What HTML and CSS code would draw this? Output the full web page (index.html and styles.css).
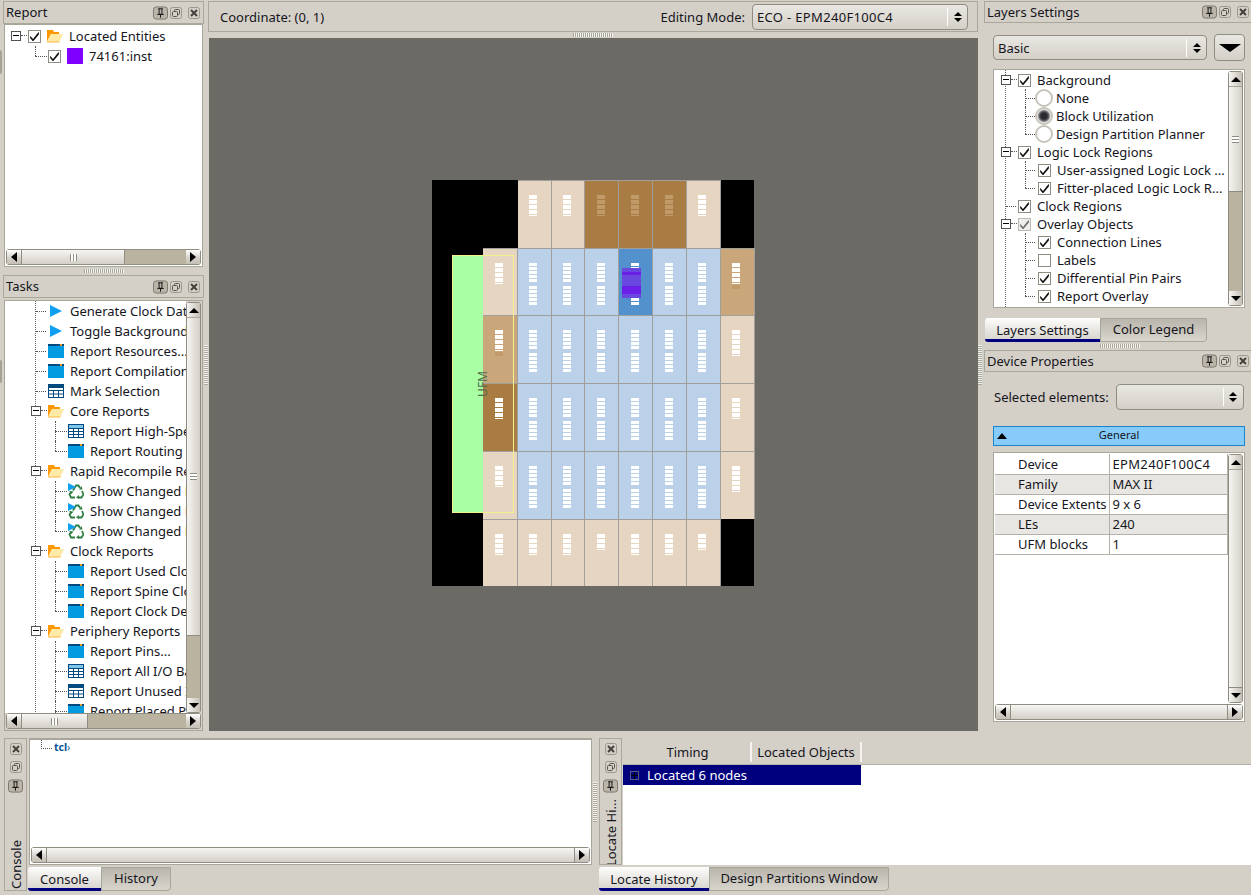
FILE: index.html
```html
<!DOCTYPE html>
<html lang="en">
<head>
<meta charset="utf-8">
<title>Chip Planner</title>
<link rel="stylesheet" href="styles.css">
</head>
<body>
<svg class="defs" width="0" height="0">
  <defs>
    <symbol id="i-check" viewBox="0 0 13 13"><path d="M2.5 6.5 L5 9.5 L10.5 2.5 L10.5 4.5 L5 11 L2.5 8 Z" fill="#000" stroke="#000" stroke-width=".6"/></symbol>
    <symbol id="i-folder" viewBox="0 0 16 14"><path d="M0 1 H6 L7 3 H12 V5 H4 L0 13 Z" fill="#ff9800"/><path d="M0 13 L4 5 H16 L12.500 13 Z" fill="#ffe9a6"/><path d="M0 13 H12.500" stroke="#ffb640" stroke-width="1"/></symbol>
    <symbol id="i-play" viewBox="0 0 16 14"><path d="M2 1 L14 7 L2 13 Z" fill="#0f9ff0"/></symbol>
    <symbol id="i-report" viewBox="0 0 16 14"><rect y="1" width="16" height="13" fill="#009be0"/><rect y="0" width="16" height="2" fill="#004a80"/><rect x="12" y="0" width="2" height="2" fill="#f0a020"/></symbol>
    <symbol id="i-table" viewBox="0 0 16 14"><rect x=".5" y=".5" width="15" height="13" fill="#fff" stroke="#004a80"/><rect x="1" y="1" width="14" height="3" fill="#7fc4ec"/><path d="M0 4.500 H16 M0 7.500 H16 M0 10.500 H16 M5.500 5 V14 M10.500 5 V14" stroke="#004a80"/></symbol>
    <symbol id="i-table-dark" viewBox="0 0 16 14"><rect x=".5" y=".5" width="15" height="13" fill="#fff" stroke="#004a80"/><rect x="1" y="1" width="14" height="3" fill="#004a80"/><path d="M0 6.500 H16 M0 10 H16 M5.500 6 V14 M10.500 6 V14" stroke="#004a80"/></symbol>
    <symbol id="i-recycle" viewBox="0 0 16 16"><g fill="none" stroke="#2f7f45" stroke-width="1.800"><path d="M5 7.500 L8 2.500 H10.500 L12 5"/><path d="M14 8 L15.500 11.500 L13.500 14.500 H10.500"/><path d="M7 14.500 H3 L1.500 11.500 L3 9"/></g><path d="M11 6.500 L14.500 6.500 L13.500 3 Z M11 12 V16 L8 14.500 Z M1 8 L5.500 8.500 L3.500 11 Z" fill="#2f7f45"/><path d="M0 0 L8 4 L0 8 Z" fill="#0f9ff0"/></symbol>
    <symbol id="i-pin" viewBox="0 0 16 14"><rect x=".5" y=".5" width="15" height="13" rx="3" fill="#bab5a8" stroke="#77746b"/><path d="M5.500 2.500 H10.500 M6.500 2.500 V8.500 H9.500 V2.500 M4.500 8.500 H11.500 M8 8.500 V12" fill="none" stroke="#111"/></symbol>
    <symbol id="i-float" viewBox="0 0 12 12"><rect x=".5" y=".5" width="11" height="11" rx="2" fill="#d4d0c8" stroke="#9a978d"/><rect x="4.500" y="2.500" width="5" height="5" rx="1" fill="none" stroke="#55534d"/><rect x="2.500" y="4.500" width="5" height="5" rx="1" fill="#d4d0c8" stroke="#55534d"/></symbol>
    <symbol id="i-close" viewBox="0 0 12 12"><rect x=".5" y=".5" width="11" height="11" rx="2" fill="#d4d0c8" stroke="#9a978d"/><path d="M3 3 L9 9 M9 3 L3 9" stroke="#44423d" stroke-width="2"/></symbol>
  </defs>
</svg>

<div class="app">
  <div class="upper">
    <aside class="left-col">
      <i class="edge edge-a"></i><i class="edge edge-b"></i>
      <section class="left-report">
        <header class="title"><span class="title-text">Report</span><span class="title-btns"><svg class="b-pin"><use href="#i-pin"/></svg><svg class="b-small"><use href="#i-float"/></svg><svg class="b-small"><use href="#i-close"/></svg></span></header>
        <div class="well report-well">
          <div class="tree report-tree">
            <div class="row"><span class="exp"></span><span class="cb"><svg><use href="#i-check"/></svg></span><svg class="ic"><use href="#i-folder"/></svg><span>Located Entities</span></div>
            <div class="row rep-sub"><span class="cb"><svg><use href="#i-check"/></svg></span><span class="swatch"></span><span>74161:inst</span></div>
          </div>
          <div class="hscroll"><span class="sb-btn"><i class="tri-l"></i></span><span class="thumb-h thumb-rep"><i class="grip-v"></i></span><span class="trough"></span><span class="sb-btn"><i class="tri-r"></i></span></div>
        </div>
      </section>
      <div class="split-h split-left-h"><i class="handle-h"></i></div>
      <section class="left-tasks">
        <header class="title"><span class="title-text">Tasks</span><span class="title-btns"><svg class="b-pin"><use href="#i-pin"/></svg><svg class="b-small"><use href="#i-float"/></svg><svg class="b-small"><use href="#i-close"/></svg></span></header>
        <div class="well tasks-well">
          <div class="well-main">
            <div class="tree tasks-tree">
              <div class="row t0"><svg class="ic"><use href="#i-play"/></svg><span>Generate Clock Data</span></div>
              <div class="row t0"><svg class="ic"><use href="#i-play"/></svg><span>Toggle Background</span></div>
              <div class="row t0"><svg class="ic"><use href="#i-report"/></svg><span>Report Resources...</span></div>
              <div class="row t0"><svg class="ic"><use href="#i-report"/></svg><span>Report Compilation</span></div>
              <div class="row t0"><svg class="ic"><use href="#i-table-dark"/></svg><span>Mark Selection</span></div>
              <div class="row tf"><span class="exp"></span><svg class="ic"><use href="#i-folder"/></svg><span>Core Reports</span></div>
              <div class="row t1"><svg class="ic"><use href="#i-table"/></svg><span>Report High-Speed</span></div>
              <div class="row t1 last"><svg class="ic"><use href="#i-report"/></svg><span>Report Routing Utilization</span></div>
              <div class="row tf"><span class="exp"></span><svg class="ic"><use href="#i-folder"/></svg><span>Rapid Recompile Reports</span></div>
              <div class="row t1"><svg class="ic ic-tall"><use href="#i-recycle"/></svg><span>Show Changed Nodes</span></div>
              <div class="row t1"><svg class="ic ic-tall"><use href="#i-recycle"/></svg><span>Show Changed Nets</span></div>
              <div class="row t1 last"><svg class="ic ic-tall"><use href="#i-recycle"/></svg><span>Show Changed Paths</span></div>
              <div class="row tf"><span class="exp"></span><svg class="ic"><use href="#i-folder"/></svg><span>Clock Reports</span></div>
              <div class="row t1"><svg class="ic"><use href="#i-report"/></svg><span>Report Used Clocks</span></div>
              <div class="row t1"><svg class="ic"><use href="#i-report"/></svg><span>Report Spine Clocks</span></div>
              <div class="row t1 last"><svg class="ic"><use href="#i-report"/></svg><span>Report Clock Details</span></div>
              <div class="row tf"><span class="exp"></span><svg class="ic"><use href="#i-folder"/></svg><span>Periphery Reports</span></div>
              <div class="row t1"><svg class="ic"><use href="#i-report"/></svg><span>Report Pins...</span></div>
              <div class="row t1"><svg class="ic"><use href="#i-table"/></svg><span>Report All I/O Banks</span></div>
              <div class="row t1"><svg class="ic"><use href="#i-table-dark"/></svg><span>Report Unused I/O</span></div>
              <div class="row t1"><svg class="ic"><use href="#i-report"/></svg><span>Report Placed Pins</span></div>
            </div>
            <div class="vscroll"><span class="sb-btn-v"><i class="tri-u"></i></span><span class="thumb-v thumb-tasks"><i class="grip-h"></i></span><span class="trough"></span><span class="sb-btn-v"><i class="tri-d"></i></span></div>
          </div>
          <div class="hscroll"><span class="sb-btn"><i class="tri-l"></i></span><span class="thumb-h thumb-tasks-h"><i class="grip-v"></i></span><span class="trough"></span><span class="sb-btn"><i class="tri-r"></i></span></div>
        </div>
      </section>
    </aside>
    <div class="split-v split-left"><i class="handle-v"></i></div>

    <main class="center">
      <div class="toolbar">
        <span>Coordinate: (0, 1)</span>
        <span class="tool-right">Editing Mode:</span>
        <span class="combo combo-mode"><span class="combo-text wide">ECO - EPM240F100C4</span><span class="spin"><i class="tri-u small"></i><i class="tri-d small"></i></span></span>
      </div>
      <div class="split-h split-center"><i class="handle-h"></i></div>
      <div class="canvas">
        <div class="chip">
          <div class="void"></div><div class="void"></div>
          <div class="cell tan"><span class="io io-a"></span></div>
          <div class="cell tan"><span class="io io-a"></span></div>
          <div class="cell brown"><span class="io io-dim"></span></div>
          <div class="cell brown"><span class="io io-dim"></span></div>
          <div class="cell brown"><span class="io io-dim"></span></div>
          <div class="cell tan"><span class="io io-a"></span></div>
          <div class="void void-end"></div>

          <div class="void"></div>
          <div class="cell tan"><span class="io io-a"></span></div>
          <div class="cell blue"><span class="le"></span><span class="le"></span></div>
          <div class="cell blue"><span class="le"></span><span class="le"></span></div>
          <div class="cell blue"><span class="le"></span><span class="le"></span></div>
          <div class="cell sel"><span class="le"></span><span class="le"></span><span class="placed"></span></div>
          <div class="cell blue"><span class="le"></span><span class="le"></span></div>
          <div class="cell blue"><span class="le"></span><span class="le"></span></div>
          <div class="cell mid"><span class="io io-a"></span><span class="io-tail"></span></div>

          <div class="void"></div>
          <div class="cell mid"><span class="io io-a"></span><span class="io-tail"></span></div>
          <div class="cell blue"><span class="le"></span><span class="le"></span></div>
          <div class="cell blue"><span class="le"></span><span class="le"></span></div>
          <div class="cell blue"><span class="le"></span><span class="le"></span></div>
          <div class="cell blue"><span class="le"></span><span class="le"></span></div>
          <div class="cell blue"><span class="le"></span><span class="le"></span></div>
          <div class="cell blue"><span class="le"></span><span class="le"></span></div>
          <div class="cell tan"><span class="io io-b"></span></div>

          <div class="void"></div>
          <div class="cell brown"><span class="io io-a"></span></div>
          <div class="cell blue"><span class="le"></span><span class="le"></span></div>
          <div class="cell blue"><span class="le"></span><span class="le"></span></div>
          <div class="cell blue"><span class="le"></span><span class="le"></span></div>
          <div class="cell blue"><span class="le"></span><span class="le"></span></div>
          <div class="cell blue"><span class="le"></span><span class="le"></span></div>
          <div class="cell blue"><span class="le"></span><span class="le"></span></div>
          <div class="cell tan"><span class="io io-a"></span></div>

          <div class="void"></div>
          <div class="cell tan"><span class="io io-a"></span></div>
          <div class="cell blue"><span class="le"></span><span class="le"></span></div>
          <div class="cell blue"><span class="le"></span><span class="le"></span></div>
          <div class="cell blue"><span class="le"></span><span class="le"></span></div>
          <div class="cell blue"><span class="le"></span><span class="le"></span></div>
          <div class="cell blue"><span class="le"></span><span class="le"></span></div>
          <div class="cell blue"><span class="le"></span><span class="le"></span></div>
          <div class="cell tan"><span class="io io-b"></span></div>

          <div class="void"></div>
          <div class="cell tan"><span class="io io-a"></span></div>
          <div class="cell tan"><span class="io io-a"></span></div>
          <div class="cell tan"><span class="io io-a"></span></div>
          <div class="cell tan"><span class="io io-c"></span></div>
          <div class="cell tan"><span class="io io-a"></span></div>
          <div class="cell tan"><span class="io io-a"></span></div>
          <div class="cell tan"><span class="io io-c"></span></div>
          <div class="void void-end"></div>

          <div class="ufm"></div>
          <div class="ufm-frame"></div>
          <span class="ufm-label">UFM</span>
        </div>
      </div>
    </main>
    <div class="split-v split-right"><i class="handle-v"></i></div>

    <aside class="right-col">
      <header class="title"><span class="title-text">Layers Settings</span><span class="title-btns"><svg class="b-pin"><use href="#i-pin"/></svg><svg class="b-small"><use href="#i-float"/></svg><svg class="b-small"><use href="#i-close"/></svg></span></header>
      <div class="layers-top">
        <span class="combo combo-basic"><span class="combo-text">Basic</span><span class="spin"><i class="tri-u small"></i><i class="tri-d small"></i></span></span>
        <span class="drop-btn"><i class="tri-big"></i></span>
      </div>
      <div class="well layers-well">
        <div class="tree layers-tree">
          <div class="row l0"><span class="exp"></span><span class="cb"><svg><use href="#i-check"/></svg></span><span>Background</span></div>
          <div class="row lr"><span class="radio"></span><span>None</span></div>
          <div class="row lr"><span class="radio on"></span><span>Block Utilization</span></div>
          <div class="row lr last"><span class="radio"></span><span>Design Partition Planner</span></div>
          <div class="row l0"><span class="exp"></span><span class="cb"><svg><use href="#i-check"/></svg></span><span>Logic Lock Regions</span></div>
          <div class="row lc"><span class="cb"><svg><use href="#i-check"/></svg></span><span>User-assigned Logic Lock ...</span></div>
          <div class="row lc last"><span class="cb"><svg><use href="#i-check"/></svg></span><span>Fitter-placed Logic Lock R...</span></div>
          <div class="row l0b"><span class="cb"><svg><use href="#i-check"/></svg></span><span>Clock Regions</span></div>
          <div class="row l0"><span class="exp"></span><span class="cb cb-gray"><svg><use href="#i-check"/></svg></span><span>Overlay Objects</span></div>
          <div class="row lc"><span class="cb"><svg><use href="#i-check"/></svg></span><span>Connection Lines</span></div>
          <div class="row lc"><span class="cb"></span><span>Labels</span></div>
          <div class="row lc"><span class="cb"><svg><use href="#i-check"/></svg></span><span>Differential Pin Pairs</span></div>
          <div class="row lc last"><span class="cb"><svg><use href="#i-check"/></svg></span><span>Report Overlay</span></div>
        </div>
        <div class="vscroll"><span class="sb-btn-v"><i class="tri-u"></i></span><span class="thumb-v thumb-layers"><i class="grip-h"></i></span><span class="trough"></span><span class="sb-btn-v"><i class="tri-d"></i></span></div>
      </div>
      <div class="tabs tabs-layers"><span class="tab active t-layers">Layers Settings</span><span class="tab t-legend">Color Legend</span></div>
      <div class="split-h split-right-h"><i class="handle-h"></i></div>
      <header class="title"><span class="title-text">Device Properties</span><span class="title-btns"><svg class="b-pin"><use href="#i-pin"/></svg><svg class="b-small"><use href="#i-float"/></svg><svg class="b-small"><use href="#i-close"/></svg></span></header>
      <div class="selected-row"><span>Selected elements:</span><span class="combo combo-sel"><span class="combo-text"></span><span class="spin"><i class="tri-u small"></i><i class="tri-d small"></i></span></span></div>
      <div class="section-bar"><i class="tri-sec"></i><span>General</span></div>
      <div class="well props-well">
        <div class="well-main">
          <div class="props-view">
            <table class="props">
              <tr><td class="pk">Device</td><td class="wide">EPM240F100C4</td></tr>
              <tr class="alt"><td class="pk">Family</td><td>MAX II</td></tr>
              <tr><td class="pk">Device Extents</td><td>9 x 6</td></tr>
              <tr class="alt"><td class="pk">LEs</td><td>240</td></tr>
              <tr><td class="pk">UFM blocks</td><td>1</td></tr>
            </table>
          </div>
          <div class="vscroll"><span class="sb-btn-v"><i class="tri-u"></i></span><span class="thumb-v thumb-full"></span><span class="sb-btn-v"><i class="tri-d"></i></span></div>
        </div>
        <div class="hscroll"><span class="sb-btn"><i class="tri-l"></i></span><span class="thumb-h thumb-full"></span><span class="sb-btn"><i class="tri-r"></i></span></div>
      </div>
    </aside>
  </div>

  <div class="lower">
    <section class="dock dock-console">
      <div class="side side-console">
        <svg class="b-small"><use href="#i-close"/></svg><svg class="b-small"><use href="#i-float"/></svg><svg class="b-pin"><use href="#i-pin"/></svg>
        <span class="side-label">Console</span>
      </div>
      <div class="dock-stack">
        <div class="well console-well">
          <div class="console-view"><span class="tcl">tcl<i class="tcl-gt">›</i></span></div>
          <div class="hscroll"><span class="sb-btn"><i class="tri-l"></i></span><span class="thumb-h thumb-full"></span><span class="sb-btn"><i class="tri-r"></i></span></div>
        </div>
        <div class="tabs tabs-console"><span class="tab active t-console">Console</span><span class="tab t-history">History</span></div>
      </div>
    </section>
    <div class="split-v split-dock"><i class="handle-v"></i></div>
    <section class="dock dock-locate">
      <div class="dock-body">
        <div class="side">
          <svg class="b-small"><use href="#i-close"/></svg><svg class="b-small"><use href="#i-float"/></svg><svg class="b-pin"><use href="#i-pin"/></svg>
          <span class="side-label">Locate Hi...</span>
        </div>
        <div class="locate-view">
          <div class="loc-head"><span class="col-timing">Timing</span><span class="col-objects">Located Objects</span></div>
          <div class="loc-row"><span class="exp exp-plus"></span><span>Located 6 nodes</span></div>
        </div>
      </div>
      <div class="tabs"><span class="tab active t-locate">Locate History</span><span class="tab t-design">Design Partitions Window</span></div>
    </section>
  </div>
</div>
</body>
</html>
```
FILE: styles.css
```css
* { box-sizing: border-box; }
html, body { margin: 0; height: 100%; }
body {
  width: 1251px; height: 895px; overflow: hidden;
  background: #d4d0c8; color: #15151c;
  font: 13px/18px "Noto Sans", sans-serif;
}
.defs { position: absolute; }
.app { display: flex; flex-direction: column; height: 895px; }
.upper { display: flex; height: 735px; }
.lower { display: flex; height: 160px; padding: 3px 0 0 4px; }
.wide { letter-spacing: .33px; }

/* panels */
.left-col { position: relative; width: 204px; padding: 1px 0 0 3px; display: flex; flex-direction: column; flex: none; }
.edge { position: absolute; left: 0; width: 2px; background: #a5a298; border-radius: 0 2px 2px 0; }
.edge-a { top: 50px; height: 24px; }
.edge-b { top: 360px; height: 23px; }
.left-report { display: flex; flex-direction: column; height: 266px; }
.left-tasks { display: flex; flex-direction: column; height: 456px; }
.title {
  height: 23px; flex: none; display: flex; align-items: center; padding: 0 3px 0 2px;
  border: 1px solid #aaa79d;
}
.title-text { padding-bottom: 2px; }
.title-btns { margin-left: auto; display: flex; align-items: center; gap: 2px; }
.title-btns .b-small:last-child { margin-left: 4px; }
.b-pin { width: 15px; height: 14px; flex: none; }
.b-small { width: 12px; height: 12px; flex: none; }
.well { border: 1px solid #a8a59b; background: #fff; display: flex; flex-direction: column; }
.well-main { display: flex; flex: 1; min-height: 0; }
.report-well { margin: 0 1px; flex: 1; min-height: 0; }
.tasks-well { margin: 2px 1px 0; flex: 1; min-height: 0; background: #d4d0c8; }

/* splitters */
.split-h { height: 9px; flex: none; display: flex; align-items: center; justify-content: center; }
.split-left-h { height: 8px; }
.handle-h { display: block; width: 40px; height: 4px; background: repeating-linear-gradient(90deg, #a9a69c 0 1px, #f4f3ef 1px 2px); }
.split-v { width: 4px; flex: none; display: flex; align-items: center; justify-content: center; }
.handle-v { display: block; width: 4px; height: 40px; flex: none; background: repeating-linear-gradient(0deg, #a9a69c 0 1px, #f4f3ef 1px 2px); }
.split-left, .split-right { align-items: flex-start; padding-top: 345px; }

/* scrollbars */
.hscroll { height: 16px; flex: none; display: flex; margin: 0 1px 1px; border: 1px solid #8f8c82; border-radius: 3px; background: #bab3a0; }
.vscroll { width: 15px; flex: none; display: flex; flex-direction: column; margin: 1px 1px 0 0; border: 1px solid #8f8c82; border-radius: 3px; background: #bab3a0; }
.sb-btn { width: 14px; flex: none; display: flex; align-items: center; justify-content: center; background: linear-gradient(#fff, #d4d0c8 60%, #c4c0b6); }
.sb-btn-v { height: 14px; flex: none; display: flex; align-items: center; justify-content: center; background: linear-gradient(90deg, #f6f5f2, #d4d0c8 70%, #c4c0b6); }
.trough { flex: 1; min-width: 0; min-height: 0; }
.thumb-h { flex: none; display: flex; align-items: center; justify-content: center; background: linear-gradient(#f6f5f2, #d4d0c8); border-left: 1px solid #8f8c82; border-right: 1px solid #8f8c82; }
.thumb-v { flex: none; display: flex; align-items: center; justify-content: center; background: linear-gradient(90deg, #f6f5f2, #d4d0c8); border-top: 1px solid #a8a59b; border-bottom: 1px solid #8f8c82; }
.thumb-full { flex: 1; }
.thumb-rep { width: 104px; }
.thumb-tasks-h { width: 67px; }
.thumb-tasks { height: 319px; }
.thumb-layers { height: 106px; }
.grip-v { display: block; width: 7px; height: 7px; background: repeating-linear-gradient(90deg, #8f8c82 0 1px, #fff 1px 3px); }
.grip-h { display: block; width: 7px; height: 7px; background: repeating-linear-gradient(0deg, #8f8c82 0 1px, #fff 1px 3px); }
.tri-l, .tri-r, .tri-u, .tri-d, .tri-big, .tri-sec { display: block; width: 0; height: 0; border-style: solid; border-color: transparent; }
.tri-l { border-width: 5px 6px 5px 0; border-right-color: #000; }
.tri-r { border-width: 5px 0 5px 6px; border-left-color: #000; }
.tri-u { border-width: 0 5px 5px; border-bottom-color: #000; }
.tri-d { border-width: 5px 5px 0; border-top-color: #000; }
.tri-big { border-width: 8px 11px 0; border-top-color: #000; }
.tri-sec { border-width: 0 5.500px 6px; border-bottom-color: #000; }

/* trees */
.tree { flex: 1; min-width: 0; min-height: 0; overflow: hidden; background-color: #fff; }
.row { position: relative; display: flex; align-items: center; white-space: nowrap; height: 20px; }
.row::before, .row::after { position: absolute; display: block; }
.exp {
  width: 10px; height: 10px; flex: none; position: relative; background: #fff; border: 1px solid #55534d;
}
.exp::before { content: ""; position: absolute; left: 1px; right: 1px; top: 3px; height: 2px; border-top: 1px solid #000; }
.exp::after { content: ""; position: absolute; left: 100%; top: 3px; width: 6px; border-top: 1px dotted #555; margin-left: 1px; }
.ic { width: 16px; height: 14px; flex: none; margin-right: 6px; }
.ic-tall { height: 16px; }
.cb { width: 13px; height: 13px; flex: none; background: #fff; border: 1px solid #8f8c82; display: block; position: relative; }
.cb svg { width: 13px; height: 13px; position: absolute; left: -1px; top: -1px; display: block; }
.cb-gray { background: #e6e4df; opacity: .6; }
.swatch { width: 16px; height: 16px; background: #8000ff; flex: none; margin-right: 6px; }

.report-tree { padding-top: 1px; }
.report-tree .row:first-child { padding-left: 6px; }
.report-tree .row:first-child .exp { margin-right: 7px; }
.report-tree .row:first-child .cb { margin-right: 6px; }
.rep-sub { padding-left: 43px; }
.rep-sub .cb { margin-right: 6px; }
.rep-sub::before { content: ""; left: 30px; top: 10px; width: 12px; border-top: 1px dotted #555; }
.rep-sub::after { content: ""; left: 30px; top: 0; height: 10px; border-left: 1px dotted #555; }

.tasks-tree { background-image: linear-gradient(#666 50%, transparent 50%); background-size: 1px 2px; background-repeat: repeat-y; background-position: 30px 0; }
.t0 { padding-left: 43px; }
.t0::before { content: ""; left: 31px; top: 10px; width: 10px; border-top: 1px dotted #555; }
.tf { padding-left: 26px; }
.tf .exp { margin-right: 7px; }
.t1 { padding-left: 63px; }
.t1::before { content: ""; left: 50px; top: 10px; width: 12px; border-top: 1px dotted #555; }
.t1::after { content: ""; left: 50px; top: 0; height: 20px; border-left: 1px dotted #555; }
.t1.last::after { height: 10px; }

/* center */
.center { width: 770px; flex: none; display: flex; flex-direction: column; }
.toolbar { height: 31px; margin-top: 1px; flex: none; display: flex; align-items: center; padding: 0 9px 0 11px; border: 1px solid #aaa79d; }
.tool-right { margin-left: auto; margin-right: 7px; }
.split-center { height: 6px; }
.canvas { height: 693px; margin-left: 1px; background: #6b6a65; padding-top: 142px; display: flex; justify-content: center; align-items: flex-start; }
.chip {
  position: relative; background: none;
  display: grid; grid-template-columns: 51px 35px 34px 33px 34px 34px 34px 34px 34px;
  grid-template-rows: 68px 67px 68px 68px 68px 67px;
  width: 323px; height: 406px;
}
.void { background: #000; }
.void-end { margin-right: 1px; }
.cell { position: relative; border-top: 1px solid #a09f9c; border-right: 1px solid #a09f9c; padding: 14px 0 0 11px; }
.cell:nth-child(9n+2), .cell:nth-child(9n+5), .cell:nth-child(9n+6), .cell:nth-child(9n+7) { padding-left: 12px; }
.tan { background: #e6d6c1; }
.mid { background: #c9a77b; }
.brown { background: #a97c43; }
.blue { background: #bbd1ea; }
.sel { background: #5391cd; }
.le { display: block; width: 8px; height: 20px; margin-bottom: 3px; background: repeating-linear-gradient(#fff 0 3px, transparent 3px 4px); }
.io { display: block; width: 8px; height: 21px; background: repeating-linear-gradient(#fff 0 4px, transparent 4px 5px); }
.io-dim { background: repeating-linear-gradient(#c09a68 0 4px, transparent 4px 5px); }
.io-b { height: 26px; }
.io-c { height: 16px; }
.io-tail { display: block; width: 8px; height: 4px; margin-top: 1px; background: #c09a68; }
.placed { position: absolute; left: 3px; top: 19px; width: 19px; height: 30px; background: linear-gradient(#6a48e0 0 4px, #6a20e8 4px 7px, #6a48e0 7px 10px, #6a48e0 10px 18px, #6a20e8 18px 26px, #6a48e0 26px); }
.ufm { position: absolute; left: 20px; top: 75px; width: 31px; height: 258px; background: #a8ffa4; border: 1px solid #f5f08c; border-right: 0; }
.ufm-frame { position: absolute; left: 20px; top: 75px; width: 62px; height: 258px; border: 1px solid #f5f08c; }
.ufm-label { position: absolute; left: 45px; top: 191px; font-size: 12px; line-height: 12px; color: #4f6e50; writing-mode: vertical-rl; transform: rotate(180deg); }

/* combos */
.combo { display: flex; align-items: center; height: 26px; flex: none; border: 1px solid #8f8c82; border-radius: 4px; background: linear-gradient(#e9e7e2, #d4d0c8); }
.combo-text { flex: 1; padding-left: 4px; }
.spin { width: 20px; height: 18px; flex: none; display: flex; flex-direction: column; align-items: center; justify-content: center; gap: 2px; border-left: 1px solid #fff; }
.tri-u.small { border-width: 0 4px 4px; }
.tri-d.small { border-width: 4px 4px 0; }
.combo-mode { width: 216px; }
.combo-basic { width: 214px; height: 25px; }
.combo-sel { width: 128px; margin-left: 7px; }

/* right */
.right-col { flex: 1; min-width: 0; padding: 1px 0 0 2px; display: flex; flex-direction: column; position: relative; }
.right-col .title { height: 22px; border-right: 0; padding-right: 2px; }
.right-col .title-text { padding: 0; }
.layers-top { display: flex; align-items: center; gap: 7px; padding: 11px 0 8px 9px; height: 46px; flex: none; }
.drop-btn { width: 31px; height: 27px; flex: none; display: flex; align-items: center; justify-content: center; border: 1px solid #8f8c82; border-radius: 4px; background: linear-gradient(#e9e7e2, #d4d0c8); }
.layers-well { margin-left: 9px; width: 252px; height: 239px; flex: none; flex-direction: row; }
.layers-tree { padding-top: 1px; background-image: linear-gradient(#666 50%, transparent 50%); background-size: 1px 2px; background-repeat: repeat-y; background-position: 11px 0; }
.layers-tree .row { height: 18px; }
.l0 { padding-left: 7px; }
.l0 .exp { margin-right: 7px; }
.l0 .cb { margin-right: 6px; }
.l0b .cb { margin-right: 6px; }
.l0b { padding-left: 24px; }
.l0b::before { content: ""; left: 12px; top: 9px; width: 10px; border-top: 1px dotted #555; }
.lr { padding-left: 41px; }
.radio { width: 18px; height: 18px; flex: none; margin-right: 3px; border-radius: 50%; background: #fff; border: 2px solid #c8c4bb; position: relative; }
.radio.on { background: radial-gradient(circle at 50% 50%, #2a2a30 0 3px, #6a6a70 5px, #fff 7px); }
.lr::before, .lc::before { content: ""; left: 31px; top: 9px; width: 10px; border-top: 1px dotted #555; }
.lr::after, .lc::after { content: ""; left: 31px; top: 0; height: 18px; border-left: 1px dotted #555; }
.lr.last::after, .lc.last::after { height: 9px; }
.lc { padding-left: 44px; }
.lc .cb { margin-right: 6px; }
.layers-well .vscroll { margin-bottom: 1px; }
.tabs { display: flex; height: 24px; flex: none; margin-top: 2px; }
.tabs-layers { margin: 10px 0 0 1px; }
.tabs-console { margin-left: -1px; }
.tab {
  display: flex; align-items: center; justify-content: center; height: 24px; flex: none;
  border: 1px solid #a8a59b; border-radius: 0 0 4px 0; padding-bottom: 2px;
  background: linear-gradient(#b9b5ac, #d8d5cd);
}
.tab.active { background: linear-gradient(#fdfdfc, #d9d6cf); border: 0; border-bottom: 3px solid #00007f; border-radius: 3px 0 0 3px; padding: 2px 0 0; }
.t-layers { width: 115px; } .t-legend { width: 107px; }
.t-console { width: 73px; } .t-history { width: 70px; }
.t-locate { width: 110px; } .t-design { width: 180px; }
.split-right-h { height: 8px; justify-content: flex-start; padding-left: 116px; }
.selected-row { display: flex; align-items: center; height: 26px; margin: 12px 0 16px; padding-left: 10px; flex: none; }
.section-bar { position: relative; margin-left: 9px; width: 252px; height: 20px; flex: none; background: #87cbfa; border: 1px solid #1a84c8; display: flex; align-items: center; justify-content: center; font-size: 11px; padding-bottom: 2px; }
.tri-sec { position: absolute; left: 3px; top: 6px; }
.props-well { margin: 6px 0 0 9px; width: 252px; height: 270px; flex: none; }
.props-view { flex: 1; min-width: 0; padding: 1px 0 0 1px; overflow: hidden; }
.props { border-collapse: collapse; width: 233px; table-layout: fixed; }
.props td { height: 20px; padding: 0 0 0 3px; border: 1px solid #b4b1a8; border-width: 0 1px 1px 0; white-space: nowrap; }
.props .pk { width: 114px; padding-left: 23px; }
.props .alt td { background: #e8e6e2; }
.props-well .vscroll { margin-bottom: 1px; }

/* docks */
.dock { display: flex; flex-direction: column; }
.dock-console { width: 588px; flex-direction: row; }
.dock-stack { flex: 1; min-width: 0; display: flex; flex-direction: column; }
.dock-locate { flex: 1; min-width: 0; margin-left: 2px; }
.dock-body { display: flex; height: 127px; flex: none; }
.side { width: 23px; flex: none; border: 1px solid #aaa79d; display: flex; flex-direction: column; align-items: center; gap: 6px; padding-top: 4px; overflow: hidden; margin-right: 1px; }
.side-console { height: 153px; margin-right: 2px; }
.side-label { margin-top: auto; writing-mode: vertical-rl; transform: rotate(180deg); white-space: nowrap; line-height: 20px; padding-top: 1px; }
.console-well { height: 127px; flex: none; border-width: 2px 1px 1px; }
.console-view { flex: 1; min-height: 0; position: relative; padding-left: 24px; }
.console-view::before { content: ""; position: absolute; left: 11px; top: 0; height: 8px; width: 10px; border-left: 1px dotted #555; border-bottom: 1px dotted #555; }
.tcl { display: block; font-size: 10.500px; line-height: 14px; font-weight: 700; color: #0a5596; }
.tcl-gt { font-style: normal; font-weight: 400; }
.split-dock { height: 127px; margin-left: 1px; }
.locate-view { flex: 1; min-width: 0; background: #fff; }
.loc-head { display: flex; height: 27px; background: #d4d0c8; padding-top: 4px; border-bottom: 1px solid #b4b1a8; }
.loc-head span { display: flex; align-items: center; justify-content: center; height: 20px; border-right: 2px solid #f4f3ef; }
.col-timing { width: 129px; padding-left: 2px; } .col-objects { width: 110px; }
.loc-row { display: flex; align-items: center; width: 238px; height: 20px; background: #00007f; color: #fff; padding-left: 7px; }
.exp-plus { width: 9px; height: 9px; background: transparent; border-color: #5a5a80; margin-right: 8px; }
.exp-plus::before { border-color: #000; left: 0; right: 0; }
.exp-plus::after { left: 3px; top: 0; width: 0; height: 7px; margin: 0; border-top: 0; border-left: 1px solid #000; }
```
